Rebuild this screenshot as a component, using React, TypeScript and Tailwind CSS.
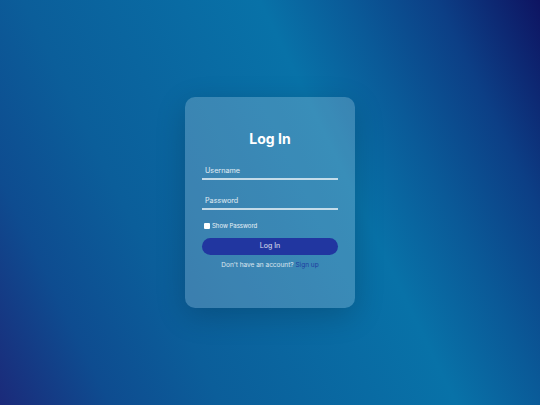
import React from "react";

export default function App() {
  return (
    <div
      className="w-[540px] h-[405px] flex items-start justify-center overflow-hidden"
      style={{ fontFamily: '"Inter", "Noto Sans", sans-serif' }}
    >
      <div className="w-full h-full flex justify-center pt-[97px] bg-[linear-gradient(64deg,#1b2a7a_0%,#0e4c90_15%,#0b5e9a_30%,#0872a8_62%,#0a5a98_74%,#0c3f86_86%,#0e1462_100%)]">
        <div className="w-[170px] h-[211px] rounded-[10px] bg-white/20 shadow-[0_8px_30px_rgba(0,0,0,0.18)] flex flex-col px-[17px] pt-[32px]">
          <h1 className="h-[20px] leading-[20px] text-center text-white font-bold text-[14px]">
            Log In
          </h1>
          <input
            type="text"
            placeholder="Username"
            className="mt-[14px] h-[17px] w-full bg-transparent border-b-2 border-white/70 pl-[3px] text-[7.2px] text-white placeholder:text-white/85 outline-none"
          />
          <input
            type="password"
            placeholder="Password"
            className="mt-[13px] h-[17px] w-full bg-transparent border-b-2 border-white/70 pl-[3px] text-[7.2px] text-white placeholder:text-white/85 outline-none"
          />
          <label className="mt-[10px] h-[11px] flex items-center gap-[2px] pl-[2px] text-[6px] text-white/90">
            <input type="checkbox" className="appearance-none w-[6px] h-[6px] bg-white rounded-[1px] m-0" />
            <span>Show Password</span>
          </label>
          <button className="mt-[7px] h-[17px] w-full rounded-full bg-[#2136a0] text-[7px] text-white/85">
            Log In
          </button>
          <p className="mt-[5px] h-[10px] leading-[10px] text-center text-[6.5px] text-white/80">
            Don&apos;t have an account? <span className="text-[#1e3ca0]">Sign up</span>
          </p>
        </div>
      </div>
    </div>
  );
}
